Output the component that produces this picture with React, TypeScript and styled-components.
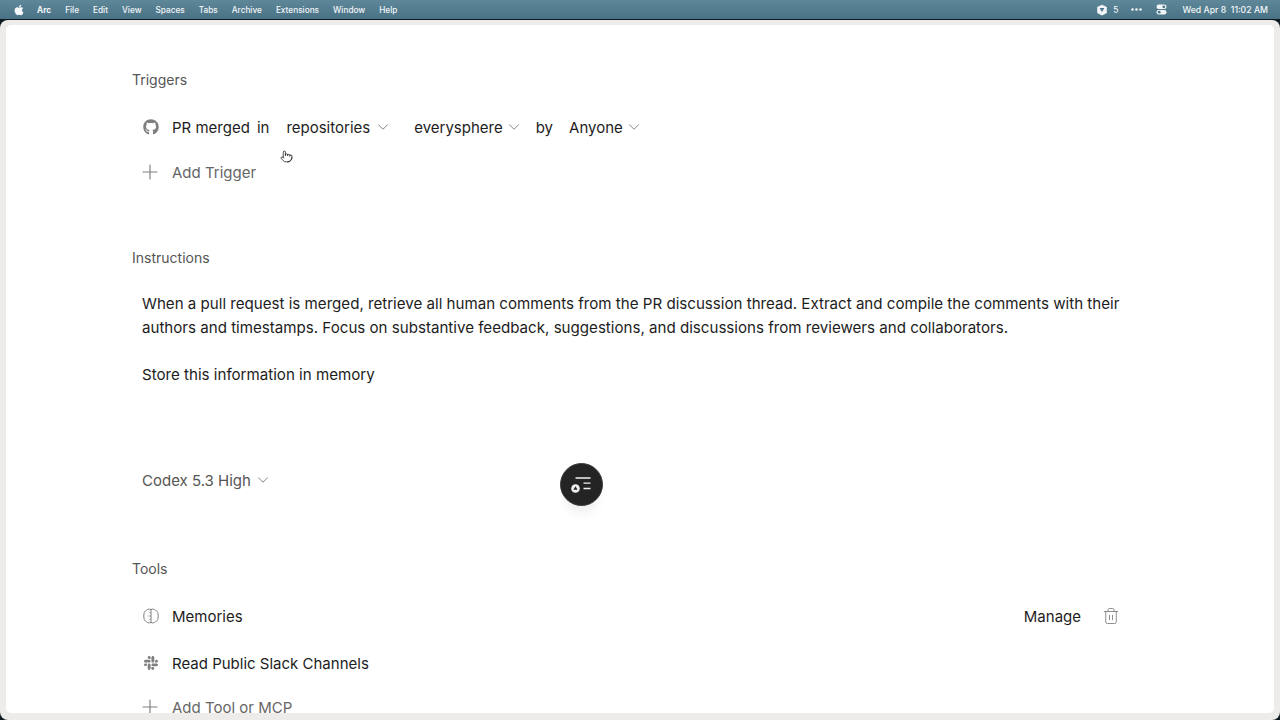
import styled, { createGlobalStyle } from "styled-components";
import { ChevronDown, Plus, Pointer, Trash2 } from "lucide-react";
import { FaApple, FaGithub, FaSlack } from "react-icons/fa";

const GlobalStyle = createGlobalStyle`
  html, body {
    margin: 0;
    height: 720px;
    overflow: hidden;
    background: #0d1a20;
    font-family: Inter, "Liberation Sans", sans-serif;
  }
`;

const Screen = styled.div`
  width: 1280px;
  height: 720px;
  display: flex;
  flex-direction: column;
  overflow: hidden;
  position: relative;
`;

const MenuBar = styled.div`
  height: 19px;
  flex: none;
  display: flex;
  align-items: center;
  justify-content: space-between;
  padding: 0 12px;
  background: linear-gradient(#5e8799, #4a7286);
  color: #f2f6f8;
  font-size: 8.25px;
  font-weight: 500;
`;

const MenuGroup = styled.div`
  display: flex;
  align-items: center;
`;

const MenuItem = styled.span<{ $bold?: boolean }>`
  margin-left: ${(p) => (p.$bold ? "12px" : "14px")};
  font-weight: ${(p) => (p.$bold ? 700 : 500)};
`;

const StatusItem = styled.span<{ $gap: number }>`
  display: flex;
  align-items: center;
  margin-left: ${(p) => p.$gap}px;
`;

const Clock = styled(StatusItem)`
  font-size: 8.7px;
`;

const Frame = styled.div`
  flex: 1;
  min-height: 0;
  padding-top: 1px;
  background: #0d1a20;
`;

const Chrome = styled.div`
  height: 100%;
  box-sizing: border-box;
  border-radius: 8px;
  background: #edecea;
  padding: 5px 6px 7px 6px;
`;

const Panel = styled.div`
  height: 100%;
  background: #fff;
  border-radius: 5px;
  overflow: hidden;
  padding: 0 0 0 126px;
  box-sizing: border-box;
  color: #1a1a1a;
`;

const SectionLabel = styled.div<{ $top: number }>`
  margin-top: ${(p) => p.$top}px;
  height: 20px;
  line-height: 20px;
  font-size: 14px;
  color: #555;
`;

const Row = styled.div<{ $top: number; $muted?: boolean }>`
  margin-top: ${(p) => p.$top}px;
  width: 988px;
  height: 24px;
  display: flex;
  align-items: center;
  font-size: 15px;
  color: ${(p) => (p.$muted ? "#666" : "#1d1d1d")};
`;

const IconSlot = styled.span`
  width: 40px;
  padding-left: 11px;
  box-sizing: border-box;
  flex: none;
  display: flex;
  align-items: center;
  color: #808080;
`;

const AddIcon = styled(Plus)`
  margin-left: -5px;
  flex: none;
`;

const Word = styled.span<{ $left?: number }>`
  margin-left: ${(p) => p.$left ?? 0}px;
`;

const Caret = styled(ChevronDown)<{ $left?: number }>`
  margin-left: ${(p) => p.$left ?? 4}px;
  color: #777;
  flex: none;
`;

const Paragraph = styled.p<{ $top: number }>`
  margin: ${(p) => p.$top}px 0 0 10px;
  width: 990px;
  font-size: 15.12px;
  line-height: 24px;
  color: #1d1d1d;
`;

const ModelPicker = styled.div`
  margin: 81px 0 0 10px;
  height: 24px;
  display: flex;
  align-items: center;
  font-size: 15px;
  color: #555;
`;

const Manage = styled.span`
  margin-left: auto;
`;

const DeleteIcon = styled(Trash2)`
  margin-left: 21px;
  color: #777;
  flex: none;
`;

const FloatButton = styled.div`
  position: absolute;
  left: 560px;
  top: 463px;
  width: 43px;
  height: 43px;
  border-radius: 50%;
  background: #242424;
  border: 1px solid #3c3c3c;
  box-sizing: border-box;
  box-shadow: 0 12px 12px -6px rgba(0, 0, 0, 0.08);
  display: flex;
  align-items: center;
  justify-content: center;
`;

const Cursor = styled(Pointer)`
  position: absolute;
  left: 280px;
  top: 150px;
  color: #222;
`;

const caret = { size: 18, strokeWidth: 1.2 };

export default function App() {
  return (
    <Screen>
      <GlobalStyle />
      <MenuBar>
        <MenuGroup>
          <FaApple size={12} color="#f5f8fa" style={{ marginLeft: 1 }} />
          <MenuItem $bold>Arc</MenuItem>
          {["File", "Edit", "View", "Spaces", "Tabs", "Archive", "Extensions", "Window", "Help"].map((m) => (
            <MenuItem key={m}>{m}</MenuItem>
          ))}
        </MenuGroup>
        <MenuGroup>
          <svg width="12" height="12" viewBox="0 0 12 12">
            <path d="M6 .8 10.8 3v6L6 11.4 1.2 9V3z" fill="#f2f6f8" />
            <path d="M3.6 4h4.8L6 8z" fill="#4d7589" />
          </svg>
          <StatusItem $gap={5}>5</StatusItem>
          <StatusItem $gap={13}>
            <svg width="11" height="3" viewBox="0 0 11 3">
              <circle cx="1.5" cy="1.5" r="1.3" fill="#f2f6f8" />
              <circle cx="5.5" cy="1.5" r="1.3" fill="#f2f6f8" />
              <circle cx="9.5" cy="1.5" r="1.3" fill="#f2f6f8" />
            </svg>
          </StatusItem>
          <StatusItem $gap={14}>
            <svg width="11" height="11" viewBox="0 0 11 11">
              <rect x="0.5" y="0.5" width="10" height="4.5" rx="2.2" fill="#f2f6f8" />
              <rect x="0.5" y="6" width="10" height="4.5" rx="2.2" fill="#f2f6f8" />
              <circle cx="7.8" cy="2.8" r="1.4" fill="#4d7589" />
              <circle cx="3.2" cy="8.2" r="1.4" fill="#4d7589" />
            </svg>
          </StatusItem>
          <Clock $gap={15}>Wed Apr 8&nbsp;&nbsp;11:02 AM</Clock>
        </MenuGroup>
      </MenuBar>
      <Frame>
        <Chrome>
          <Panel>
            <SectionLabel $top={45}>Triggers</SectionLabel>
            <Row $top={25}>
              <IconSlot>
                <FaGithub size={16} />
              </IconSlot>
              <Word>PR merged</Word>
              <Word $left={7}>in</Word>
              <Word $left={17}>repositories</Word>
              <Caret {...caret} />
              <Word $left={22}>everysphere</Word>
              <Caret {...caret} $left={2} />
              <Word $left={13}>by</Word>
              <Word $left={16}>Anyone</Word>
              <Caret {...caret} $left={2} />
            </Row>
            <Row $top={21} $muted>
              <IconSlot>
                <AddIcon size={24} strokeWidth={1.2} />
              </IconSlot>
              <Word>Add Trigger</Word>
            </Row>
            <SectionLabel $top={64}>Instructions</SectionLabel>
            <Paragraph $top={24}>
              When a pull request is merged, retrieve all human comments from the PR discussion thread. Extract and compile the comments with their authors and timestamps. Focus on substantive feedback, suggestions, and discussions from reviewers and collaborators.
            </Paragraph>
            <Paragraph $top={23}>Store this information in memory</Paragraph>
            <ModelPicker>
              Codex 5.3 High
              <Caret {...caret} $left={3} />
            </ModelPicker>
            <SectionLabel $top={67}>Tools</SectionLabel>
            <Row $top={25}>
              <IconSlot>
                <svg width="16" height="16" viewBox="0 0 16 16" fill="none" stroke="currentColor" strokeWidth="1">
                  <path d="M8 1v14" />
                  <path d="M8 1.6C6.6.7 4.6 1 3.6 2.2 2 2.8 1 4.2 1 6c-.4 1.3-.4 2.7 0 4 0 1.8 1 3.2 2.6 3.8 1 1.2 3 1.5 4.4.6 1.4.9 3.4.6 4.4-.6C14 13.2 15 11.8 15 10c.4-1.3.4-2.7 0-4 0-1.8-1-3.2-2.6-3.8C11.4 1 9.4.7 8 1.6z" />
                  <path d="M8 8H4.6M8 5.4 5.8 4M8 10.6 5.8 12" opacity=".6" />
                </svg>
              </IconSlot>
              <Word>Memories</Word>
              <Manage>Manage</Manage>
              <DeleteIcon size={18} strokeWidth={1.1} />
            </Row>
            <Row $top={23}>
              <IconSlot>
                <FaSlack size={16} />
              </IconSlot>
              <Word>Read Public Slack Channels</Word>
            </Row>
            <Row $top={20} $muted>
              <IconSlot>
                <AddIcon size={24} strokeWidth={1.2} />
              </IconSlot>
              <Word>Add Tool or MCP</Word>
            </Row>
          </Panel>
        </Chrome>
      </Frame>
      <FloatButton>
        <svg width="22" height="16" viewBox="0 0 22 16">
          <path d="M4.5 1h15M12.5 6.2h7M12.5 11.5h7" stroke="#f0f0f0" strokeWidth="1.3" />
          <circle cx="4.5" cy="11.5" r="4.3" fill="#f0f0f0" />
          <path d="M4.5 9.2 6.6 12.8H2.4z" fill="#242424" />
        </svg>
      </FloatButton>
      <Cursor size={13} strokeWidth={1.5} />
    </Screen>
  );
}
